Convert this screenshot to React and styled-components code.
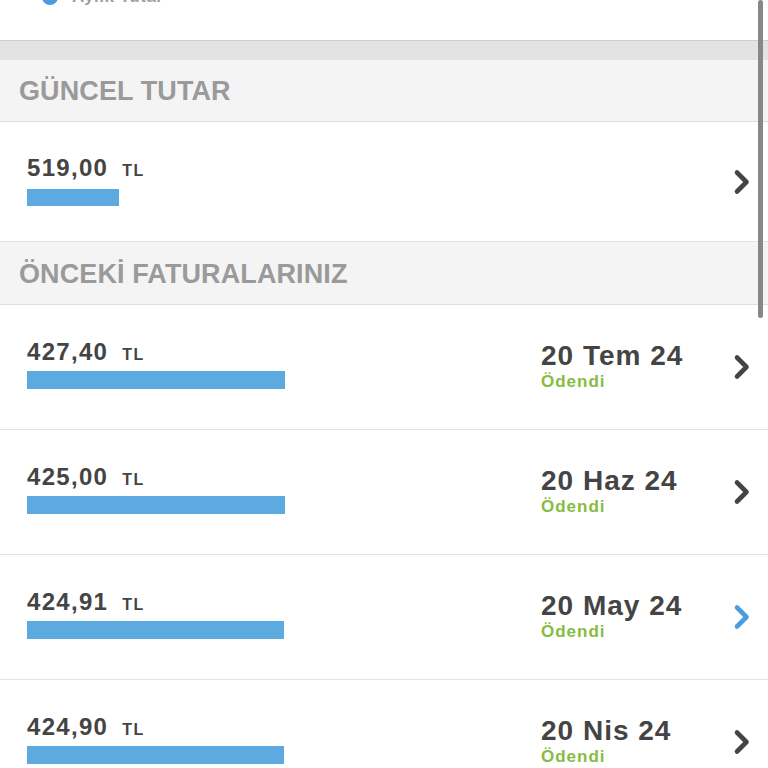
import styled, { createGlobalStyle } from "styled-components";

const GlobalStyle = createGlobalStyle`
  html, body {
    margin: 0;
    padding: 0;
    background: #fff;
    font-family: "Liberation Sans", Arial, sans-serif;
  }
`;

const Page = styled.div`
  position: relative;
  width: 768px;
  height: 768px;
  overflow: hidden;
  background: #fff;
`;

const LegendArea = styled.div`
  height: 40px;
  border-bottom: 1px solid #cfcfcf;
  overflow: hidden;
`;

// legend of the chart above, scrolled mostly out of view
const LegendItem = styled.div`
  display: flex;
  align-items: center;
  gap: 14px;
  margin-top: -13px;
  padding-left: 42px;
  color: #a0a0a0;
  font-weight: 700;
  font-size: 17px;
  letter-spacing: 0.5px;
`;

const Dot = styled.span`
  width: 16px;
  height: 16px;
  border-radius: 50%;
  background: #4a9de0;
`;

const Band = styled.div`
  height: 19px;
  background: #e3e3e3;
`;

const SectionHeader = styled.div`
  display: flex;
  align-items: center;
  height: ${({ $h }) => $h}px;
  padding-left: 19px;
  padding-top: 2px;
  box-sizing: border-box;
  background: #f4f4f4;
  border-bottom: 1px solid #dedede;
  color: #9a9a9a;
  font-size: 27px;
  font-weight: 700;
  letter-spacing: 0.1px;
`;

const Row = styled.div`
  display: flex;
  align-items: flex-start;
  height: ${({ $h }) => $h}px;
  padding-left: 27px;
  padding-right: 10px;
  box-sizing: border-box;
  background: #fff;
  border-bottom: 1px solid ${({ $last }) => ($last ? "#fff" : "#e2e2e2")};
`;

const AmountBlock = styled.div`
  flex: 1;
  padding-top: ${({ $top }) => $top}px;
`;

const Amount = styled.div`
  display: flex;
  align-items: baseline;
  gap: 14px;
  height: 28px;
  line-height: 28px;
  color: #444;
  font-size: 24px;
  font-weight: 700;
  letter-spacing: 1.3px;
`;

const Currency = styled.span`
  font-size: 16px;
  letter-spacing: 1.5px;
`;

const Bar = styled.div`
  height: ${({ $h }) => $h}px;
  margin-top: ${({ $gap }) => $gap}px;
  background: #5caae0;
`;

const DateBlock = styled.div`
  width: 187px;
  padding-top: 36px;
`;

const DateText = styled.div`
  color: #444;
  font-size: 28px;
  line-height: 30px;
  font-weight: 700;
  letter-spacing: 1px;
`;

const Status = styled.div`
  margin-top: 1px;
  color: #86bc42;
  font-size: 17px;
  line-height: 20px;
  font-weight: 700;
  letter-spacing: 1px;
`;

const ChevronBox = styled.div`
  align-self: center;
  width: 30px;
  display: flex;
  padding-left: 5px;
  box-sizing: border-box;
  color: ${({ $active }) => ($active ? "#4a9de0" : "#444")};
`;

const Scrollbar = styled.div`
  position: absolute;
  top: 0;
  right: 5px;
  width: 5px;
  height: 318px;
  border-radius: 3px;
  background: #878787;
`;

function Chevron() {
  return (
    <svg width="18" height="26" viewBox="0 0 18 26">
      <path
        d="M4 3.5 L13.5 13 L4 22.5"
        fill="none"
        stroke="currentColor"
        strokeWidth="4.6"
        strokeLinecap="round"
        strokeLinejoin="round"
      />
    </svg>
  );
}

const bills = [
  { amount: "427,40", date: "20 Tem 24", width: 258 },
  { amount: "425,00", date: "20 Haz 24", width: 258 },
  { amount: "424,91", date: "20 May 24", width: 257, active: true },
  { amount: "424,90", date: "20 Nis 24", width: 257 },
];

export default function App() {
  return (
    <>
      <GlobalStyle />
      <Page>
        <LegendArea>
          <LegendItem>
            <Dot />
            Aylık Tutar
          </LegendItem>
        </LegendArea>
        <Band />
        <SectionHeader $h={62}>GÜNCEL TUTAR</SectionHeader>
        <Row $h={120}>
          <AmountBlock $top={32}>
            <Amount>
              519,00 <Currency>TL</Currency>
            </Amount>
            <Bar $h={17} $gap={7} style={{ width: 92 }} />
          </AmountBlock>
          <ChevronBox>
            <Chevron />
          </ChevronBox>
        </Row>
        <SectionHeader $h={63}>ÖNCEKİ FATURALARINIZ</SectionHeader>
        {bills.map((b, i) => (
          <Row key={b.date} $h={125} $last={i === bills.length - 1}>
            <AmountBlock $top={33}>
              <Amount>
                {b.amount} <Currency>TL</Currency>
              </Amount>
              <Bar $h={18} $gap={5} style={{ width: b.width }} />
            </AmountBlock>
            <DateBlock>
              <DateText>{b.date}</DateText>
              <Status>Ödendi</Status>
            </DateBlock>
            <ChevronBox $active={b.active}>
              <Chevron />
            </ChevronBox>
          </Row>
        ))}
        <Scrollbar />
      </Page>
    </>
  );
}
